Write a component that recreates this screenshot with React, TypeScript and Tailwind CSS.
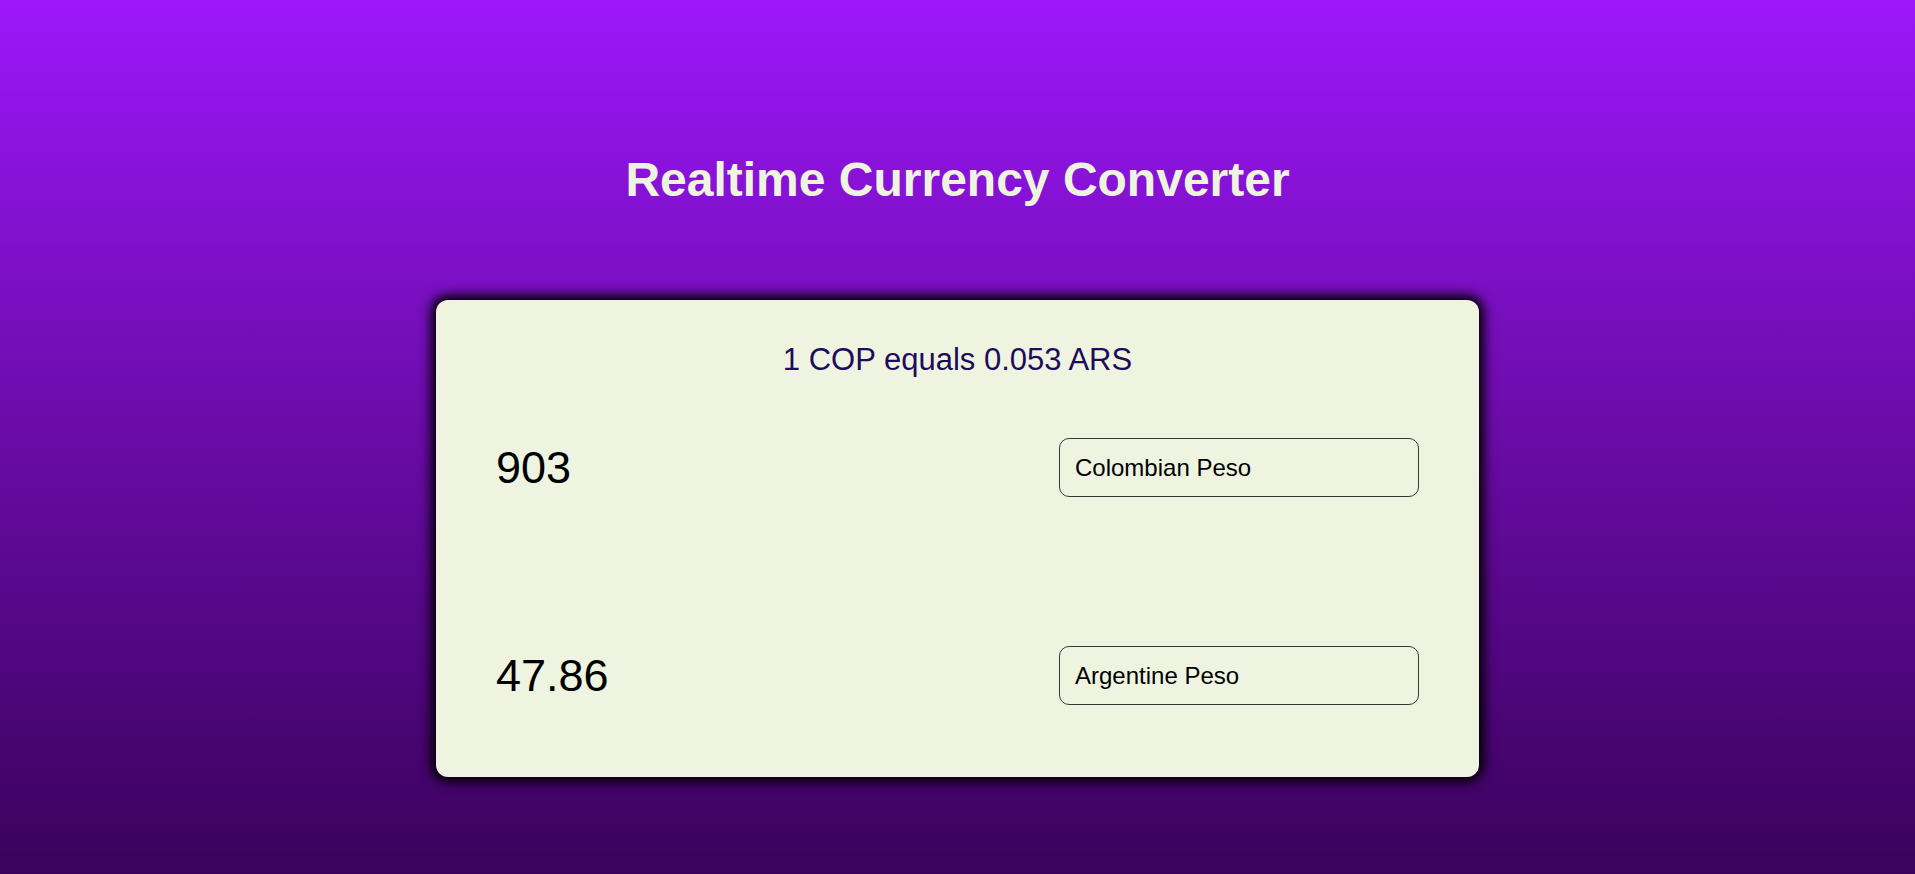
import React from "react";

const CurrencyRow = ({ amount, currency }: { amount: string; currency: string }) => (
  <div className="flex items-center justify-between h-[59px]">
    <div className="text-[45px] leading-[50px] text-black">{amount}</div>
    <div className="w-[360px] h-[59px] border border-[#3b3636] rounded-[10px] flex items-center pl-[15px] text-[24px] text-black">
      {currency}
    </div>
  </div>
);

const App = () => {
  return (
    <div
      className="min-h-screen bg-gradient-to-b from-[#9d17fa] to-[#3a035b] pt-[152px] pb-[98px]"
      style={{ fontFamily: '"Liberation Sans", Arial, sans-serif' }}
    >
      {/* Title */}
      <h1 className="text-center text-[48px] leading-[56px] font-bold text-[#eef4e0]">
        Realtime Currency Converter
      </h1>

      {/* Converter card */}
      <div className="mx-auto mt-[92px] w-[1043px] bg-[#eef4e0] rounded-[12px] shadow-[0_0_12px_5px_#000] pt-[42px] pb-[72px] px-[60px]">
        <p className="text-center text-[31px] leading-[36px] text-[#1f0b5c]">
          1 COP equals 0.053 ARS
        </p>

        <div className="mt-[60px]">
          <CurrencyRow amount="903" currency="Colombian Peso" />
        </div>

        <div className="mt-[149px]">
          <CurrencyRow amount="47.86" currency="Argentine Peso" />
        </div>
      </div>
    </div>
  );
};

export default App;
